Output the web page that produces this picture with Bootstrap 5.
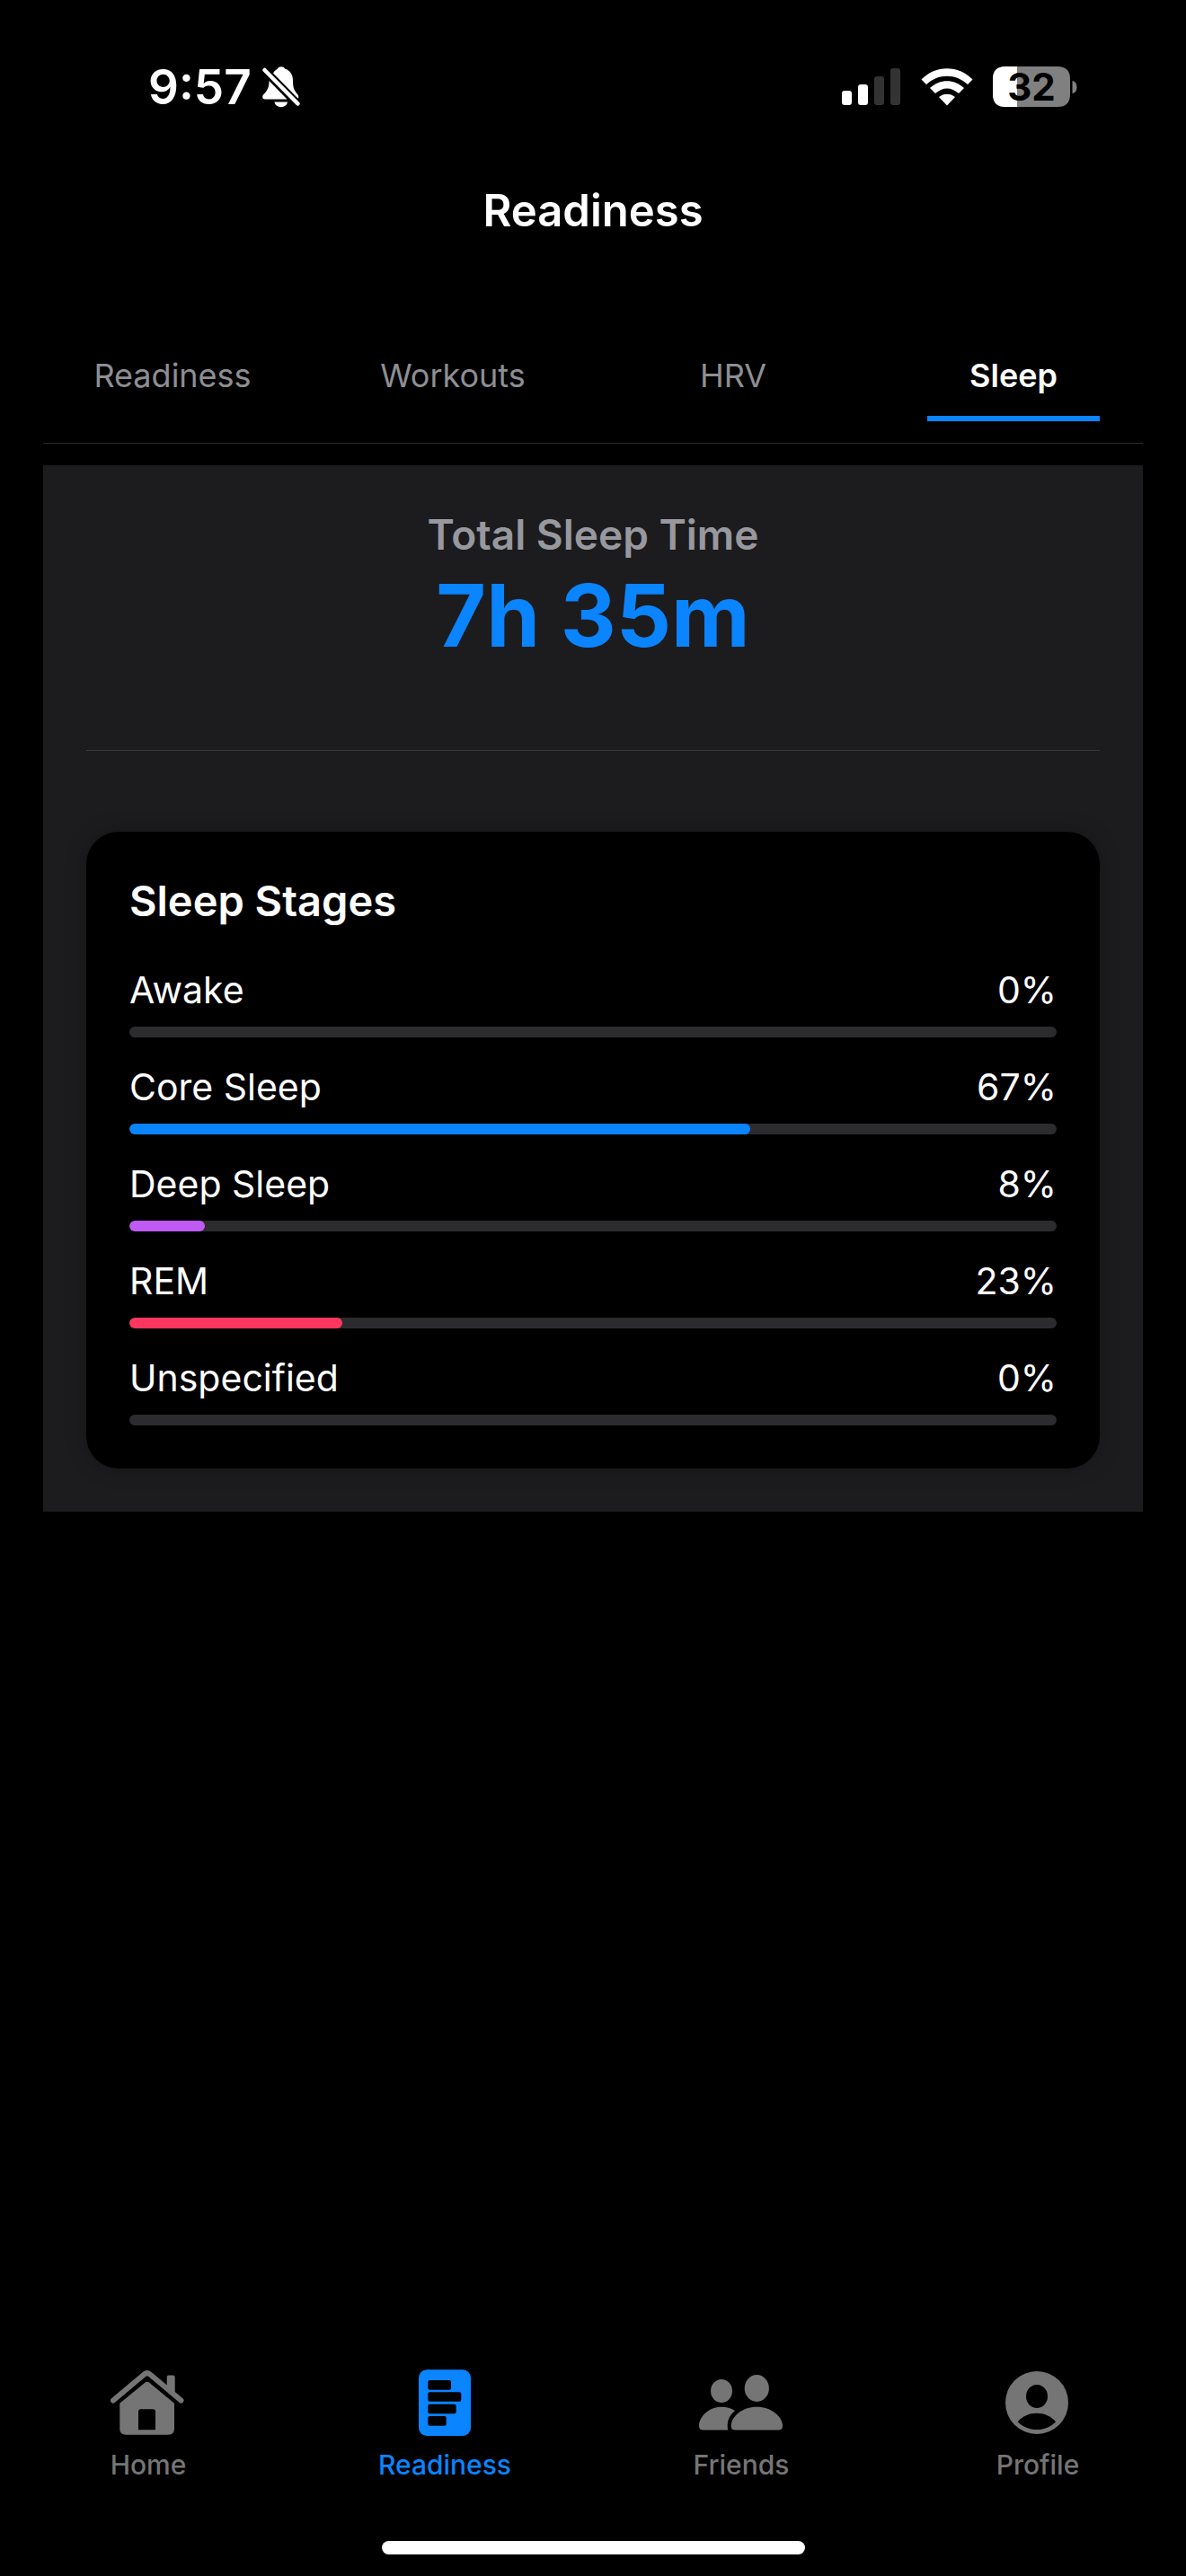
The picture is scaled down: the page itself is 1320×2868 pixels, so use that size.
<!DOCTYPE html>
<html lang="en" data-bs-theme="dark">
<head>
<meta charset="utf-8">
<meta name="viewport" content="width=device-width, initial-scale=1">
<title>Readiness</title>
<link href="https://cdn.jsdelivr.net/npm/bootstrap@5.3.0/dist/css/bootstrap.min.css" rel="stylesheet">
<style>
  body { background: #000; color: #fff; font-family: Inter, "Liberation Sans", sans-serif; }
  .status-bar { padding: 72px 121px 0 165px; }
  .status-row { height: 50px; }
  .clock-group { gap: 10px; }
  .clock { font-size: 53px; line-height: 50px; font-weight: 600; }
  .signal-group { gap: 22px; }
  .battery { width: 94px; height: 46px; }
  .battery-level { font-size: 42px; line-height: 46px; font-weight: 700; color: #000; left: 0; top: 0; width: 86px; }
  .screen-title { font-size: 49px; line-height: 60px; font-weight: 600; margin: 83px 0 0; }
  .content { padding: 129px 48px 48px; }
  .tab-strip { padding: 0 48px 24px; border-bottom: 1px solid #2c2c2e; margin-bottom: 24px; }
  .tab-strip .nav-link { width: 192px; padding: 0 0 21px; border-bottom: 6px solid transparent; font-size: 36px; line-height: 48px; color: #8e8e93; white-space: nowrap; }
  .tab-strip .nav-link.active { color: #fff; font-weight: 600; border-bottom-color: #0a84ff; }
  .panel { background: #1c1c1e; padding: 48px; }
  .summary { padding-bottom: 89px; border-bottom: 1px solid #38383a; margin-bottom: 90px; }
  .summary-label { font-size: 46px; line-height: 58px; font-weight: 600; color: #98989f; margin: 0; }
  .summary-value { font-size: 96px; line-height: 122px; font-weight: 700; color: #0a84ff; margin: 0; }
  .stages { background: #000; border-radius: 36px; padding: 48px; box-shadow: 0 0 24px rgba(0, 0, 0, .22); }
  .stages-title { font-size: 47px; line-height: 58px; font-weight: 600; margin: 0 0 45px; }
  .stage-list { gap: 30px; }
  .stage-line { font-size: 41px; line-height: 50px; margin-bottom: 16px; }
  .stages .progress { height: 12px; border-radius: 6px; background: #2c2c2e; }
  .stages .progress-bar { border-radius: 6px; }
  .fill-core { background: #0a84ff; }
  .fill-deep { background: #bf5af2; }
  .fill-rem { background: #ff375f; }
  .bottom-nav .nav-link { padding: 0; gap: 13px; font-size: 30px; line-height: 38px; font-weight: 500; color: #757575; }
  .bottom-nav .nav-link.active { color: #0a84ff; }
  .home-indicator { width: 471px; height: 15px; margin: 66px auto 24px; background: #fff; }
</style>
<script src="https://cdn.jsdelivr.net/npm/bootstrap@5.3.0/dist/js/bootstrap.bundle.min.js" defer></script>
</head>
<body>
<div class="d-flex flex-column min-vh-100">
  <header>
    <div class="status-bar">
      <div class="status-row d-flex align-items-center justify-content-between">
        <div class="clock-group d-flex align-items-center">
          <span class="clock">9:57</span>
          <svg width="46" height="48" viewBox="0 0 46 48" fill="#fff" role="img" aria-label="Silent mode">
            <path d="M14 8.500C15.500 5.500 18 4.500 19 3.500C20 .5 26 .5 27 3.500C33 5.500 36 10 36 17C36 26 38 28 41.500 32.500C42.500 34 42.500 36 41.500 36.500Z"/>
            <path d="M9.500 17L29.500 37.500H5C2 37.500 1.500 34.500 3 32.500C8 27.500 9.500 24 9.500 17Z"/>
            <path d="M15.500 40.500H30C29 48 16.500 48 15.500 40.500Z"/>
            <path d="M4.500 5L41.500 42.500" stroke="#fff" stroke-width="4.500" stroke-linecap="round"/>
          </svg>
        </div>
        <div class="signal-group d-flex align-items-center">
          <svg width="66" height="42" viewBox="0 0 66 42" role="img" aria-label="Signal, two of four bars">
            <g fill="#fff"><rect y="25" width="11" height="16" rx="3"/><rect x="18" y="18" width="11" height="23" rx="3"/></g>
            <g fill="#333"><rect x="36" y="9" width="11" height="32" rx="3"/><rect x="54" width="11" height="41" rx="3"/></g>
          </svg>
          <svg width="58" height="42" viewBox="0 0 58 42" fill="#fff" role="img" aria-label="Wi-Fi">
            <path d="M.5 12.500C16-4 42-4 57.500 12.500L52 18C39 5.500 19 5.500 6 18Z"/>
            <path d="M10 22C21 11.500 37 11.500 48 22L42 28C34 20.500 24 20.500 16 28Z"/>
            <path d="M20 32C25 27.500 33 27.500 38 32L29 41.500Z"/>
          </svg>
          <div class="battery position-relative">
            <svg class="d-block" width="94" height="46" viewBox="0 0 94 46" aria-hidden="true">
              <path d="M14 0H72Q86 0 86 14V31Q86 45 72 45H14Q0 45 0 31V14Q0 0 14 0Z" fill="#808080"/>
              <path d="M14 0H27V45H14Q0 45 0 31V14Q0 0 14 0Z" fill="#fff"/>
              <path d="M88.500 16Q93.500 17 93.500 23T88.500 30Z" fill="#808080"/>
            </svg>
            <span class="battery-level position-absolute text-center">32</span>
          </div>
        </div>
      </div>
    </div>
    <h1 class="screen-title text-center">Readiness</h1>
  </header>

  <main class="content">
    <nav aria-label="Sections">
      <div class="nav tab-strip justify-content-between text-center">
        <a class="nav-link" href="#readiness">Readiness</a>
        <a class="nav-link" href="#workouts">Workouts</a>
        <a class="nav-link" href="#hrv">HRV</a>
        <a class="nav-link active" href="#sleep" aria-current="page">Sleep</a>
      </div>
    </nav>

    <section class="panel" id="sleep">
      <div class="summary text-center">
        <h2 class="summary-label">Total Sleep Time</h2>
        <p class="summary-value">7h 35m</p>
      </div>

      <div class="stages">
        <h2 class="stages-title">Sleep Stages</h2>
        <div class="stage-list d-flex flex-column">
          <div>
            <div class="stage-line d-flex justify-content-between"><span id="awake">Awake</span><span>0%</span></div>
            <div class="progress" role="progressbar" aria-labelledby="awake" aria-valuenow="0" aria-valuemin="0" aria-valuemax="100"><div class="progress-bar" style="width: 0%"></div></div>
          </div>
          <div>
            <div class="stage-line d-flex justify-content-between"><span id="core">Core Sleep</span><span>67%</span></div>
            <div class="progress" role="progressbar" aria-labelledby="core" aria-valuenow="67" aria-valuemin="0" aria-valuemax="100"><div class="progress-bar fill-core" style="width: 67%"></div></div>
          </div>
          <div>
            <div class="stage-line d-flex justify-content-between"><span id="deep">Deep Sleep</span><span>8%</span></div>
            <div class="progress" role="progressbar" aria-labelledby="deep" aria-valuenow="8" aria-valuemin="0" aria-valuemax="100"><div class="progress-bar fill-deep" style="width: 8.15%"></div></div>
          </div>
          <div>
            <div class="stage-line d-flex justify-content-between"><span id="rem">REM</span><span>23%</span></div>
            <div class="progress" role="progressbar" aria-labelledby="rem" aria-valuenow="23" aria-valuemin="0" aria-valuemax="100"><div class="progress-bar fill-rem" style="width: 23%"></div></div>
          </div>
          <div>
            <div class="stage-line d-flex justify-content-between"><span id="unspecified">Unspecified</span><span>0%</span></div>
            <div class="progress" role="progressbar" aria-labelledby="unspecified" aria-valuenow="0" aria-valuemin="0" aria-valuemax="100"><div class="progress-bar" style="width: 0%"></div></div>
          </div>
        </div>
      </div>
    </section>
  </main>

  <footer class="mt-auto">
    <nav class="nav nav-justified flex-nowrap bottom-nav" aria-label="Main">
      <a class="nav-link d-flex flex-column align-items-center" href="#home">
        <svg width="96" height="76" viewBox="0 0 96 76" fill="currentColor" aria-hidden="true">
          <path d="M9 36.500L43.500 7.500Q46.700 4.800 50 7.500L84.500 36.500" fill="none" stroke="currentColor" stroke-width="6" stroke-linecap="round"/>
          <path d="M68.700 24V10.700Q68.700 8.400 71 8.400H75.400Q77.700 8.400 77.700 10.700V31.500Z"/>
          <path fill-rule="evenodd" d="M44 17Q46.700 14.500 49.500 17L77 39.700V68Q77 74.700 70.300 74.700H23Q16.300 74.700 16.300 68V39.700ZM39.500 46.300Q37 46.300 37 48.800V69.300H56V48.800Q56 46.300 53.500 46.300Z"/>
        </svg>
        <span>Home</span>
      </a>
      <a class="nav-link active d-flex flex-column align-items-center" href="#readiness" aria-current="page">
        <svg width="96" height="76" viewBox="0 0 96 76" aria-hidden="true">
          <rect x="19" y="2.300" width="58" height="73.700" rx="9" fill="currentColor"/>
          <g fill="#000"><rect x="29.300" y="14" width="25.700" height="10.700" rx="2"/><rect x="29.300" y="27.300" width="37" height="10.500" rx="2"/><rect x="29.300" y="40.700" width="31.400" height="10.500" rx="2"/><rect x="29.300" y="54" width="20.400" height="10.700" rx="2"/></g>
        </svg>
        <span>Readiness</span>
      </a>
      <a class="nav-link d-flex flex-column align-items-center" href="#friends">
        <svg width="96" height="76" viewBox="0 0 96 76" fill="currentColor" aria-hidden="true">
          <ellipse cx="26" cy="26" rx="12" ry="13"/>
          <ellipse cx="65.300" cy="23" rx="13.600" ry="15"/>
          <path d="M41 48C36.500 45 31.500 43.700 26 43.700C12 43.700 1 54.500 1 65Q1 69.500 6 69.500H33.200C31.500 61.500 34 53.500 41 48Z"/>
          <path d="M65.300 43.700C49 43.700 36.700 54.500 36.700 65Q36.700 69.500 41.500 69.500H89.200Q94 69.500 94 65C94 54.500 81.500 43.700 65.300 43.700Z"/>
        </svg>
        <span>Friends</span>
      </a>
      <a class="nav-link d-flex flex-column align-items-center" href="#profile">
        <svg width="96" height="76" viewBox="0 0 96 76" aria-hidden="true">
          <circle cx="47" cy="39" r="35" fill="currentColor"/>
          <ellipse cx="47" cy="32" rx="12" ry="13" fill="#000"/>
          <path d="M25.700 60.300C36 47.500 58 47.500 68 60.300C58 72 36 72 25.700 60.300Z" fill="#000"/>
        </svg>
        <span>Profile</span>
      </a>
    </nav>
    <div class="home-indicator rounded-pill"></div>
  </footer>
</div>
</body>
</html>
